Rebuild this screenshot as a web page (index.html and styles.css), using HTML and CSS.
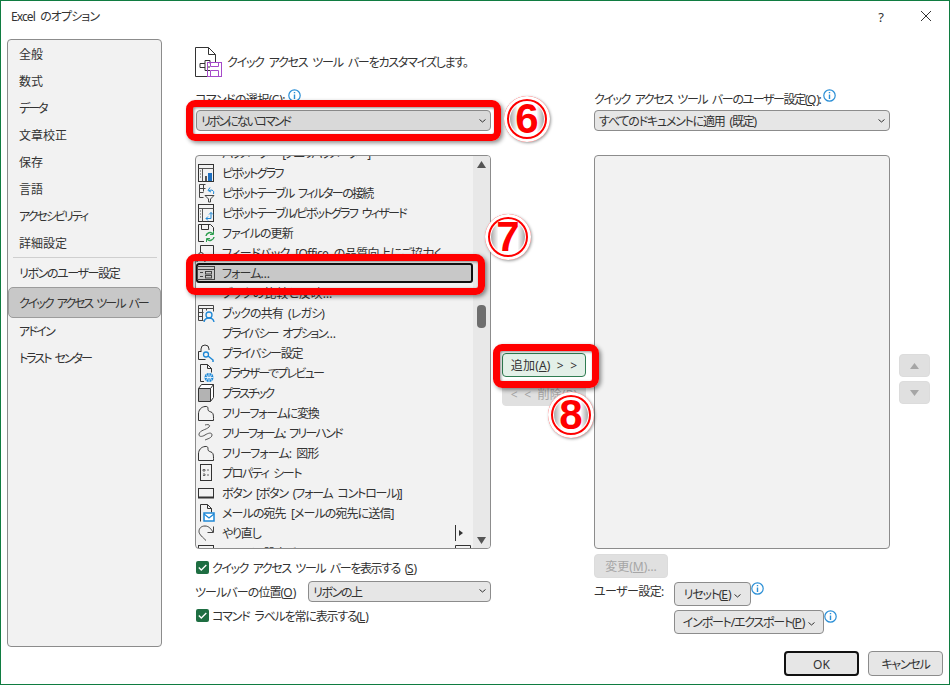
FILE: index.html
```html
<!DOCTYPE html>
<html lang="ja">
<head>
<meta charset="utf-8">
<title>Excel のオプション</title>
<link rel="stylesheet" href="styles.css">
</head>
<body>
<div class="dialog">
  <header class="titlebar">
    <span class="title ls-b">Excel のオプション</span>
    <span class="help">?</span>
    <svg class="close" width="12" height="12" viewBox="0 0 12 12"><path d="M1 1l10 10M11 1L1 11" stroke="#333" fill="none"/></svg>
  </header>
  <div class="content">
    <nav class="sidebar">
      <div class="nav-item">全般</div>
      <div class="nav-item">数式</div>
      <div class="nav-item ls-f">データ</div>
      <div class="nav-item">文章校正</div>
      <div class="nav-item">保存</div>
      <div class="nav-item">言語</div>
      <div class="nav-item ls-f">アクセシビリティ</div>
      <div class="nav-item">詳細設定</div>
      <div class="nav-sep"></div>
      <div class="nav-item nav-tight ls-d">リボンのユーザー設定</div>
      <div class="nav-item nav-sel ls-f">クイック アクセス ツール バー</div>
      <div class="nav-item ls-e">アドイン</div>
      <div class="nav-item ls-f">トラスト センター</div>
    </nav>
    <main class="main">
      <div class="heading">
        <svg width="30" height="32" viewBox="0 0 30 32" fill="none">
          <path d="M.5 30.500V1.500h13l7 7v8M13.500 1.500v7h7M.5 30.500h12" stroke="#333"/>
          <path d="M5 17.500h5v-3h5v3M5 17.500v4h5M10 17.500v7h5M13 21h2" stroke="#333"/>
          <rect x="12.500" y="16.500" width="14" height="14" stroke="#a64ac9"/>
          <path d="M15.500 16.500v4h8v-4M15.500 30.500v-6h8v6" stroke="#a64ac9"/>
        </svg>
        <span class="ls-c">クイック アクセス ツール バーをカスタマイズします。</span>
      </div>
      <div class="columns">
        <section class="col-left">
          <div class="label-row"><span class="ls-a">コマンドの選択(<u>C</u>):</span><svg class="info info-top" width="13" height="13" viewBox="0 0 13 13"><circle cx="6.500" cy="6.500" r="5.700" fill="none" stroke="#2b8fd6" stroke-width="1.200"/><path d="M6.500 3v1.200M6.500 5.500V10" stroke="#2b8fd6" stroke-width="1.400"/></svg></div>
          <div class="select select-wide"><span class="ls-f">リボンにないコマンド</span><svg class="chev" width="7" height="4" viewBox="0 0 7 4"><path d="M.5.500l3 2.500 3-2.500" fill="none" stroke="#333"/></svg></div>
          <div class="cmd-list">
            <div class="cmd-rows">
              <div class="cmd"><svg class="ic" viewBox="0 0 20 20" fill="none"><path d="M3.500 10V4.500h3M16.500 10V4.500h-3" stroke="#333"/><path d="M8 6.500a2 2 0 1 1 3 2l-1 1v1" stroke="#2b7cd3"/></svg><span class="ls-e">パラメーター [クエリパラメーター]</span></div>
              <div class="cmd"><svg class="ic" viewBox="0 0 20 20" fill="none"><rect x="2.500" y="1.500" width="15" height="17" stroke="#333"/><path d="M2.500 5.500h15M6.500 5.500v13M4 8h1M4 11h1M4 14h1" stroke="#555"/><rect x="9" y="13" width="2" height="5" fill="#555"/><rect x="12" y="10" width="4" height="8" fill="#1e6fc0"/></svg><span class="ls-e">ピボットグラフ</span></div>
              <div class="cmd"><svg class="ic" viewBox="0 0 20 20" fill="none"><path d="M3.500 1.500h6M3.500 1.500v13h4M3.500 5.500h6M3.500 9.500h4M7.500 1.500v7" stroke="#444"/><path d="M9 12.500h9l-3.500 3.500v3h-2v-3z" stroke="#444"/><path d="M13 7.500l3-.5a3 3 0 0 1 1.500 4M14 4.500l-2 3 3 1.500" stroke="#1e88d6"/></svg><span class="ls-e">ピボットテーブル フィルターの接続</span></div>
              <div class="cmd"><svg class="ic" viewBox="0 0 20 20" fill="none"><rect x="2.500" y="1.500" width="15" height="17" stroke="#333"/><path d="M2.500 5.500h15M6.500 5.500v13M4 8h1M4 11h1M4 14h1" stroke="#555"/><path d="M10 15.500h5v-6M13 11.500l2-2 2 2M12 13.500l-2 2 2 2" stroke="#1e88d6"/></svg><span class="ls-e">ピボットテーブル/ピボットグラフ ウィザード</span></div>
              <div class="cmd"><svg class="ic" viewBox="0 0 20 20" fill="none"><path d="M8 18.500H2.500v-17h12l3 3v4" stroke="#333"/><path d="M5.500 1.500v5h7v-5" stroke="#333"/><path d="M10 13a4 4 0 0 1 7-2M18 14a4 4 0 0 1-7 2" stroke="#2e9e4f" stroke-width="1.500"/><path d="M17.500 8v3.500H14M10.500 19v-3.500H14" stroke="#2e9e4f"/></svg><span class="ls-b">ファイルの更新</span></div>
              <div class="cmd"><svg class="ic" viewBox="0 0 20 20" fill="none"><path d="M4.500 9V2.500h13v10H12" stroke="#333"/><circle cx="5" cy="12" r="2.500" stroke="#333"/><path d="M1 19c0-3 2-4 4-4s4 1 4 4" stroke="#333"/></svg><span class="ls-a">フィードバック [Office の品質向上にご協力く…</span></div>
              <div class="cmd cmd-sel"><svg class="ic" viewBox="0 0 20 20" fill="none"><rect x="1.500" y="3.500" width="17" height="13" stroke="#444"/><path d="M1.500 6.500h17M4 9.500h3M4 13.500h3" stroke="#444"/><rect x="9.500" y="8.500" width="6" height="2.500" stroke="#444"/><rect x="9.500" y="12.500" width="6" height="2.500" stroke="#444"/></svg><span class="ls-b">フォーム…</span></div>
              <div class="cmd"><svg class="ic" viewBox="0 0 20 20"></svg><span>ブックの比較と反映…</span></div>
              <div class="cmd"><svg class="ic" viewBox="0 0 20 20" fill="none"><path d="M2.500 17.500v-15h15v6M2.500 5.500h15M6.500 5.500v12M2.500 9.500h5M2.500 13.500h4M2.500 17.500h5M10.500 5.500v2" stroke="#444"/><circle cx="13" cy="12" r="3" stroke="#1e88d6" stroke-width="1.300"/><path d="M8 19c.5-3 2.500-4 5-4s4.500 1 5 4" stroke="#1e88d6" stroke-width="1.300"/></svg><span class="ls-b">ブックの共有 (レガシ)</span></div>
              <div class="cmd"><svg class="ic" viewBox="0 0 20 20"></svg><span class="ls-e">プライバシー オプション…</span></div>
              <div class="cmd"><svg class="ic" viewBox="0 0 20 20" fill="none"><path d="M5 8V6a4 4 0 0 1 8 0v1M2.500 8.500v8h7M2.500 8.500h3" stroke="#333"/><circle cx="10" cy="11.500" r="2.500" stroke="#1e88d6" stroke-width="1.300"/><path d="M12 13l5 4v2" stroke="#1e88d6" stroke-width="1.500"/></svg><span class="ls-c">プライバシー設定</span></div>
              <div class="cmd"><svg class="ic" viewBox="0 0 20 20" fill="none"><path d="M8 18.500H4.500v-17h7l4 4v4M11.500 1.500v4h4" stroke="#333"/><circle cx="13" cy="14.500" r="4.500" fill="#1e88d6"/><path d="M8.500 14.500h9M13 10v9M10.500 11.500q2.500 3 0 6M15.500 11.500q-2.500 3 0 6" stroke="#fff" stroke-width=".8"/></svg><span class="ls-e">ブラウザーでプレビュー</span></div>
              <div class="cmd"><svg class="ic" viewBox="0 0 20 20" fill="none"><path d="M5.500 1.500h12v13l-3 4h-12v-13z" fill="#fff" stroke="#333"/><rect x="3" y="6" width="11" height="12" fill="#b3b3b3"/><path d="M2.500 5.500h12v13M14.500 5.500l3-4" stroke="#333"/></svg><span class="ls-f">プラスチック</span></div>
              <div class="cmd"><svg class="ic" viewBox="0 0 20 20" fill="none"><path d="M2.500 17.500V11C2.500 7 5 4 9 3.500c3-.3 3 1 3 3s2.500 2 4 3 1.500 4 1.500 6v2z" stroke="#333"/></svg><span class="ls-c">フリーフォームに変換</span></div>
              <div class="cmd"><svg class="ic" viewBox="0 0 20 20" fill="none"><path d="M9 2c3-1 6 0 4 2-3 3-9 3-10 7-.5 3 3 3 6 1 3-2 7-3 7 0 0 3-5 4-7 5" stroke="#555"/></svg><span class="ls-e">フリーフォーム: フリーハンド</span></div>
              <div class="cmd"><svg class="ic" viewBox="0 0 20 20" fill="none"><path d="M2.500 17.500V11C2.500 7 5 4 9 3.500c3-.3 3 1 3 3s2.500 2 4 3 1.500 4 1.500 6v2z" stroke="#333"/></svg><span class="ls-b">フリーフォーム: 図形</span></div>
              <div class="cmd"><svg class="ic" viewBox="0 0 20 20" fill="none"><rect x="4.500" y="1.500" width="11" height="16" stroke="#333"/><path d="M7 6.500h2v1.500H7zM7 11h2v1.500H7M11 7h2M11 12h2" stroke="#666"/></svg><span class="ls-d">プロパティ シート</span></div>
              <div class="cmd"><svg class="ic" viewBox="0 0 20 20" fill="none"><rect x="2.500" y="5.500" width="15" height="9" stroke="#333"/><path d="M2 14.500h16" stroke="#333" stroke-width="2"/></svg><span class="ls-c">ボタン [ボタン (フォーム コントロール)]</span></div>
              <div class="cmd"><svg class="ic" viewBox="0 0 20 20" fill="none"><path d="M4.500 18.500v-17h7l4 4v4M11.500 1.500v4h4" stroke="#333"/><rect x="8" y="10" width="10" height="8" fill="#fff" stroke="#1e88d6" stroke-width="1.500"/><path d="M8 11l5 4 5-4" stroke="#1e88d6" stroke-width="1.300"/></svg><span class="ls-b">メールの宛先 [メールの宛先に送信]</span></div>
              <div class="cmd"><svg class="ic" viewBox="0 0 20 20" fill="none"><path d="M17.500 9.500V3.500M17.500 9.500h-6M17 9c-2-3-4-6-8-6-4 0-6 2.500-6 5.500 0 3 4 6 7 9" stroke="#444"/></svg><span class="ls-c">やり直し</span><svg class="submenu" width="10" height="16" viewBox="0 0 10 16"><path d="M.5 0v16" stroke="#333"/><path d="M4 5l4 3-4 3z" fill="#333"/></svg></div>
              <div class="cmd"><svg class="ic" viewBox="0 0 20 20" fill="none"><rect x="2.500" y="2.500" width="15" height="14" stroke="#333"/></svg><span class="ls-c">ユーザー設定ビュー…</span><svg class="submenu" width="16" height="16" viewBox="0 0 16 16"><path d="M.5 16V.5h15V16" fill="none" stroke="#333"/></svg></div>
            </div>
            <div class="scrollbar">
              <svg class="arrow" width="9" height="7" viewBox="0 0 9 7"><path d="M4.500 0l4.500 7H0z" fill="#555"/></svg>
              <div class="thumb"></div>
              <svg class="arrow" width="9" height="7" viewBox="0 0 9 7"><path d="M0 0h9L4.500 7z" fill="#555"/></svg>
            </div>
          </div>
          <label class="check-row check-first"><span class="checkbox"><svg width="9" height="7" viewBox="0 0 9 7"><path d="M.8 3.500l2.500 2.500 5-5" fill="none" stroke="#fff" stroke-width="1.300"/></svg></span><span class="ls-d check-text">クイック アクセス ツール バーを表示する (<u>S</u>)</span></label>
          <div class="position-row"><span class="ls-b check-text">ツールバーの位置(<u>O</u>)</span><div class="select select-pos"><span class="ls-d">リボンの上</span><svg class="chev" width="7" height="4" viewBox="0 0 7 4"><path d="M.5.500l3 2.500 3-2.500" fill="none" stroke="#333"/></svg></div></div>
          <label class="check-row"><span class="checkbox"><svg width="9" height="7" viewBox="0 0 9 7"><path d="M.8 3.500l2.500 2.500 5-5" fill="none" stroke="#fff" stroke-width="1.300"/></svg></span><span class="ls-c check-text">コマンド ラベルを常に表示する(<u>L</u>)</span></label>
        </section>
        <section class="col-mid">
          <button class="btn btn-add">追加(<u>A</u>) &gt; &gt;</button>
          <button class="btn btn-del">&lt; &lt; 削除(R)</button>
        </section>
        <section class="col-right">
          <div class="label-row"><span class="ls-d">クイック アクセス ツール バーのユーザー設定(<u>Q</u>):</span><svg class="info info-top" width="13" height="13" viewBox="0 0 13 13"><circle cx="6.500" cy="6.500" r="5.700" fill="none" stroke="#2b8fd6" stroke-width="1.200"/><path d="M6.500 3v1.200M6.500 5.500V10" stroke="#2b8fd6" stroke-width="1.400"/></svg></div>
          <div class="select"><span class="ls-c">すべてのドキュメントに適用 (既定)</span><svg class="chev" width="7" height="4" viewBox="0 0 7 4"><path d="M.5.500l3 2.500 3-2.500" fill="none" stroke="#333"/></svg></div>
          <div class="qat-list"></div>
          <button class="btn btn-change">変更(<u>M</u>)…</button>
          <div class="user-row">
            <span class="user-label ls-a">ユーザー設定:</span>
            <div class="user-btns">
              <div class="user-btn-row"><button class="btn btn-reset"><span class="ls-c">リセット(<u>E</u>)</span><svg class="chev chev-btn" width="7" height="4" viewBox="0 0 7 4"><path d="M.5.500l3 2.500 3-2.500" fill="none" stroke="#333"/></svg></button><svg class="info" width="13" height="13" viewBox="0 0 13 13"><circle cx="6.500" cy="6.500" r="5.700" fill="none" stroke="#2b8fd6" stroke-width="1.200"/><path d="M6.500 3v1.200M6.500 5.500V10" stroke="#2b8fd6" stroke-width="1.400"/></svg></div>
              <div class="user-btn-row"><button class="btn btn-import"><span class="ls-c">インポート/エクスポート(<u>P</u>)</span><svg class="chev chev-btn" width="7" height="4" viewBox="0 0 7 4"><path d="M.5.500l3 2.500 3-2.500" fill="none" stroke="#333"/></svg></button><svg class="info" width="13" height="13" viewBox="0 0 13 13"><circle cx="6.500" cy="6.500" r="5.700" fill="none" stroke="#2b8fd6" stroke-width="1.200"/><path d="M6.500 3v1.200M6.500 5.500V10" stroke="#2b8fd6" stroke-width="1.400"/></svg></div>
            </div>
          </div>
        </section>
        <section class="col-move">
          <button class="btn-move"><svg width="9" height="6" viewBox="0 0 9 6"><path d="M4.500 0L9 6H0z" fill="#a6a6a6"/></svg></button>
          <button class="btn-move"><svg width="9" height="6" viewBox="0 0 9 6"><path d="M0 0h9L4.500 6z" fill="#a6a6a6"/></svg></button>
        </section>
      </div>
    </main>
  </div>
  <footer class="footer">
    <button class="btn btn-ok">OK</button>
    <button class="btn btn-cancel ls-c">キャンセル</button>
  </footer>
  <div class="callout callout-select"></div>
  <div class="callout callout-form"></div>
  <div class="callout callout-add"></div>
  <div class="badge badge-6"><span>6</span></div>
  <div class="badge badge-7"><span>7</span></div>
  <div class="badge badge-8"><span>8</span></div>
</div>
</body>
</html>
```
FILE: styles.css
```css
* { box-sizing: border-box; }
html, body { margin: 0; padding: 0; }
body {
  width: 950px;
  height: 685px;
  overflow: hidden;
  font-family: "Noto Sans", "Noto Sans CJK JP", sans-serif;
  font-size: 12px;
  font-feature-settings: "palt";
  word-spacing: 3px;
  color: #333;
  background: #fff;
}
button { font: inherit; font-feature-settings: inherit; color: inherit; padding: 0; }
u { text-underline-offset: 1px; letter-spacing: 0; }

/* Noto kana is wider than the dialog's UI font, so kana-heavy labels are tightened */
.ls-a { letter-spacing: -.6px; }
.ls-b { letter-spacing: -.9px; }
.ls-c { letter-spacing: -1.2px; }
.ls-d { letter-spacing: -1.4px; }
.ls-e { letter-spacing: -1.7px; }
.ls-f { letter-spacing: -2px; }

.dialog {
  position: relative;
  width: 950px;
  height: 685px;
  border: 1px solid #107c41;
  display: flex;
  flex-direction: column;
  background: #fff;
}

.titlebar {
  height: 38px;
  flex: none;
  display: flex;
  align-items: flex-start;
  padding: 6px 17px 0 10px;
  line-height: 20px;
}
.title { flex: 1; }
.help { width: 12px; text-align: center; margin-right: 33px; font-size: 13px; }
.close { margin-top: 3px; }

.content { flex: 1; display: flex; min-height: 0; padding-left: 6px; }

.sidebar {
  width: 155px;
  height: 608px;
  flex: none;
  background: #f2f2f2;
  border: 1px solid #8c8c8c;
  border-radius: 4px;
  margin-right: 33px;
  display: flex;
  flex-direction: column;
}
.nav-item {
  height: 27px;
  flex: none;
  padding-left: 11px;
  line-height: 29px;
  white-space: nowrap;
}
.nav-sep { height: 1px; background: #cfcfcf; margin: 1px 4px 1px 5px; flex: none; }
.nav-tight { height: 28px; line-height: 30px; }
.nav-sel {
  height: 31px;
  line-height: 31px;
  background: #c8c8c8;
  border: 1px solid #9c9c9c;
  border-radius: 5px;
  padding-left: 10px;
  margin-bottom: -1px;
}

.main { flex: 1; min-width: 0; }

.heading {
  height: 50px;
  display: flex;
  align-items: flex-start;
  padding-top: 7px;
  margin-left: -2px;
}
.heading svg { flex: none; margin-left: 2px; }
.heading span { margin-left: 2px; line-height: 34px; }

.columns { display: flex; }

.col-left { width: 296px; flex: none; }
.col-mid { width: 103px; flex: none; padding: 264px 0 0 11px; display: flex; flex-direction: column; gap: 5px; }
.col-right { width: 296px; flex: none; }
.col-move { padding: 265px 0 0 9px; display: flex; flex-direction: column; gap: 4px; }

.label-row {
  height: 21px;
  display: flex;
  align-items: flex-start;
  line-height: 18px;
  white-space: nowrap;
}
.label-row > span { padding-top: 2px; }
.info { flex: none; margin-left: 3px; }
.info-top { margin-top: 0; }

.select {
  height: 21px;
  background: #e6e6e6;
  border: 1px solid #8c8c8c;
  border-radius: 4px;
  display: flex;
  align-items: center;
  justify-content: space-between;
  padding: 0 4px;
  line-height: 19px;
}
.select > span { padding-top: 2px; }
.select-wide { background: #d9d9d9; margin-left: 1px; }
.chev { flex: none; }
.chev-btn { margin-left: 4px; vertical-align: 1px; }

.cmd-list {
  position: relative;
  margin-top: 24px;
  height: 394px;
  background: #f2f2f2;
  border: 1px solid #8c8c8c;
  border-radius: 4px;
  overflow: hidden;
  display: flex;
}
.cmd-rows { flex: 1; min-width: 0; margin-top: -13px; }
.cmd {
  position: relative;
  height: 20px;
  display: flex;
  align-items: center;
  line-height: 20px;
  white-space: nowrap;
}
.cmd-sel {
  background: #c8c8c8;
  border: 2px solid #111;
  border-radius: 3px;
}
.cmd-sel .ic { margin-left: -2px; }
.ic { width: 20px; height: 20px; flex: none; }
.cmd > span { margin-left: 6px; padding-top: 2px; }
.submenu { position: absolute; right: 2px; top: 2px; }
.cmd:nth-last-child(2) .submenu { right: 8px; }
.scrollbar {
  width: 17px;
  flex: none;
  background: #e8e8e8;
  display: flex;
  flex-direction: column;
  align-items: center;
  padding: 5px 0 4px;
}
.arrow { flex: none; }
.thumb {
  width: 9px;
  height: 23px;
  background: #6e6e6e;
  border-radius: 4px;
  margin-top: 137px;
  margin-bottom: auto;
}

.check-row { display: flex; align-items: center; height: 20px; white-space: nowrap; }
.check-first { margin-top: 8px; }
.check-text { padding-top: 2px; }
.checkbox {
  width: 13px;
  height: 13px;
  margin: 0 3px 0 1px;
  background: #1e6e42;
  border-radius: 2px;
  display: flex;
  align-items: center;
  justify-content: center;
  flex: none;
}
.position-row {
  display: flex;
  align-items: center;
  height: 22px;
  margin: 3px 0;
  white-space: nowrap;
}
.select-pos { width: 183px; margin-left: auto; }

.btn {
  background: #e6e6e6;
  border: 1px solid #8c8c8c;
  border-radius: 4px;
  text-align: center;
  white-space: nowrap;
  line-height: 20px;
  padding-top: 2px;
}
.btn-add { width: 84px; height: 24px; background: #e3f0e8; border-color: #2f7d52; word-spacing: 3px; letter-spacing: .2px; }
.btn-del { width: 84px; height: 24px; background: #e0e0e0; border-color: #e0e0e0; color: #a6a6a6; word-spacing: 3px; letter-spacing: .2px; }
.qat-list {
  margin-top: 24px;
  height: 394px;
  background: #f2f2f2;
  border: 1px solid #8c8c8c;
  border-radius: 4px;
}
.btn-change { display: block; margin-top: 5px; width: 74px; height: 24px; background: #e0e0e0; border-color: #dcdcdc; color: #a6a6a6; }
.user-row { display: flex; margin-top: 4px; }
.user-label { width: 80px; flex: none; line-height: 20px; }
.user-btns { display: flex; flex-direction: column; gap: 4px; }
.user-btn-row { display: flex; align-items: flex-start; }
.btn-reset { width: 77px; height: 24px; }
.btn-import { width: 150px; height: 24px; }
.user-btn-row .info { margin-left: 0; }

.btn-move {
  width: 31px;
  height: 23px;
  background: #e0e0e0;
  border: 1px solid #dcdcdc;
  border-radius: 4px;
  display: flex;
  align-items: center;
  justify-content: center;
}

.footer {
  position: absolute;
  right: 6px;
  bottom: 8px;
  display: flex;
  gap: 9px;
}
.btn-ok { width: 75px; height: 25px; border: 2px solid #111; }
.btn-cancel { width: 75px; height: 25px; }

.callout {
  position: absolute;
  border: 7px solid #f00;
  border-radius: 9px;
  box-shadow: 2px 2px 4px rgba(0, 0, 0, .45), inset 1px 1px 3px rgba(0, 0, 0, .45);
}
.callout-select { left: 185px; top: 99px; width: 315px; height: 41px; }
.callout-form { left: 185px; top: 253px; width: 299px; height: 41px; }
.callout-add { left: 492px; top: 343px; width: 106px; height: 44px; }

.badge {
  position: absolute;
  width: 46px;
  height: 46px;
  border-radius: 50%;
  background: #fff;
  box-shadow: inset 0 0 0 3px #fff, inset 0 0 0 5px #f00, 1px 1px 3px rgba(0, 0, 0, .4);
  display: flex;
  align-items: center;
  justify-content: center;
  color: #f00;
  font-family: "Liberation Sans", sans-serif;
  font-weight: 700;
  font-size: 42px;
  line-height: 46px;
}
.badge::before {
  content: "";
  position: absolute;
  inset: 6px;
  border-radius: 50%;
  background: linear-gradient(90deg, #a8a8a8, #fff 22%, #fff 78%, #a8a8a8);
}
.badge span { position: relative; text-shadow: 0 0 2px #fff; }
.badge-6 { left: 503px; top: 95px; }
.badge-7 { left: 484px; top: 213px; }
.badge-8 { left: 547px; top: 391px; }
```
